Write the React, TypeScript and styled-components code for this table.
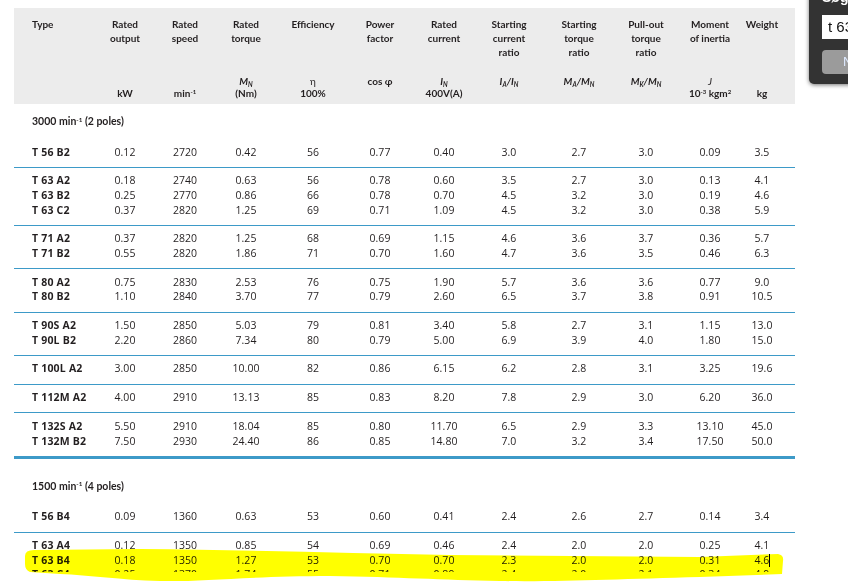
import React from 'react';
import styled, { createGlobalStyle, css } from 'styled-components';

const GlobalStyle = createGlobalStyle`
  html, body {
    margin: 0;
    padding: 0;
    background: #ffffff;
  }
  body {
    font-family: 'Open Sans', 'Liberation Sans', sans-serif;
    color: #231f20;
  }
`;

const columns = css`
  display: grid;
  grid-template-columns: 81px 60px 60px 62px 72px 62px 66px 64px 76px 58px 70px 34px;
  padding-right: 16px;
`;

const Page = styled.div`
  position: relative;
  width: 848px;
  height: 585px;
  overflow: hidden;
  background: #ffffff;
`;

const Sheet = styled.div`
  height: 572px;
  overflow: hidden;
  padding: 8px 0 0 14px;
  box-sizing: border-box;
  width: 795px;
`;

const HeaderBand = styled.div`
  ${columns};
  background: #ececec;
  height: 96px;
  box-sizing: border-box;
  padding-top: 9px;
`;

const HeadCell = styled.div<{ $left?: boolean }>`
  display: flex;
  flex-direction: column;
  text-align: ${({ $left }) => ($left ? 'left' : 'center')};
  padding-left: ${({ $left }) => ($left ? '18px' : '0')};
  font-family: Lato, 'Open Sans', sans-serif;
  font-size: 10px;
  font-weight: 700;
`;

const HeadTitle = styled.div`
  height: 58px;
  line-height: 14px;
`;

const HeadUnit = styled.div`
  line-height: 12px;
  height: 12px;
  white-space: nowrap;
`;

const Light = styled.span`
  font-weight: 400;
`;

const Ital = styled.span`
  font-style: italic;
`;

const Sup = styled.sup`
  font-size: 0.6em;
  vertical-align: baseline;
  position: relative;
  top: -0.55em;
`;

const Sub = styled.sub`
  font-size: 0.65em;
  vertical-align: baseline;
  position: relative;
  top: 0.25em;
`;

const SectionTitle = styled.div<{ $gap: number }>`
  padding: ${({ $gap }) => $gap}px 0 9px 18px;
  font-family: Lato, 'Open Sans', sans-serif;
  font-size: 10.5px;
  font-weight: 700;
  line-height: 14px;
`;

const Group = styled.div<{ $last?: boolean }>`
  padding: 5.6px 0 7.6px;
  border-bottom: ${({ $last }) => ($last ? '3px' : '1px')} solid #3d9ac8;
`;

const Row = styled.div`
  ${columns};
  font-size: 10.5px;
  line-height: 14.6px;
  white-space: nowrap;
`;

const TypeCell = styled.div`
  padding-left: 18px;
  font-weight: 700;
  letter-spacing: 0.2px;
`;

const Cell = styled.div`
  text-align: center;
`;

const Caret = styled.span`
  display: inline-block;
  width: 1px;
  height: 13px;
  background: #000;
  vertical-align: -3px;
  margin-right: -1px;
`;

const FindBox = styled.div`
  position: absolute;
  left: 809px;
  top: -8px;
  width: 80px;
  height: 92px;
  padding-left: 13px;
  box-sizing: border-box;
  background: #333333;
  border-radius: 5px;
  box-shadow: 0 1px 4px rgba(0, 0, 0, 0.55);
  font-family: 'Liberation Sans', Arial, sans-serif;
`;

const FindTitle = styled.div`
  color: #ffffff;
  font-weight: 700;
  font-size: 14px;
  line-height: 14px;
  height: 14px;
  margin-top: -2px;
`;

const FindInput = styled.div`
  margin-top: 11px;
  height: 24px;
  background: #ffffff;
  color: #111;
  font-size: 15px;
  line-height: 24px;
  padding-left: 6px;
  white-space: nowrap;
`;

const FindButton = styled.div`
  margin-top: 11px;
  height: 24px;
  background: #9b9b9b;
  border-radius: 4px;
  color: #dfeaff;
  font-size: 13px;
  line-height: 24px;
  padding-left: 21px;
`;

const Marker = styled.svg`
  position: absolute;
  left: 0;
  top: 0;
  pointer-events: none;
  mix-blend-mode: multiply;
`;

type Col = { title: string[]; unit: [React.ReactNode, React.ReactNode]; left?: boolean };

const headers: Col[] = [
  { title: ['Type'], unit: ['', ''], left: true },
  { title: ['Rated', 'output'], unit: ['', 'kW'] },
  { title: ['Rated', 'speed'], unit: ['', <>min<Sup>-1</Sup></>] },
  { title: ['Rated', 'torque'], unit: [<Ital>M<Sub>N</Sub></Ital>, '(Nm)'] },
  { title: ['Efficiency'], unit: [<Light>η</Light>, '100%'] },
  { title: ['Power', 'factor'], unit: ['cos φ', ''] },
  { title: ['Rated', 'current'], unit: [<Ital>I<Sub>N</Sub></Ital>, '400V(A)'] },
  { title: ['Starting', 'current', 'ratio'], unit: [<Ital>I<Sub>A</Sub>/I<Sub>N</Sub></Ital>, ''] },
  { title: ['Starting', 'torque', 'ratio'], unit: [<Ital>M<Sub>A</Sub>/M<Sub>N</Sub></Ital>, ''] },
  { title: ['Pull-out', 'torque', 'ratio'], unit: [<Ital>M<Sub>K</Sub>/M<Sub>N</Sub></Ital>, ''] },
  { title: ['Moment', 'of inertia'], unit: [<Light><Ital>J</Ital></Light>, <>10<Sup>-3</Sup> kgm<Sup>2</Sup></>] },
  { title: ['Weight'], unit: ['', 'kg'] },
];

type Section = { label: string; poles: string; gap: number; groups: string[][][] };

const sections: Section[] = [
  {
    label: '3000',
    poles: '2 poles',
    gap: 10,
    groups: [
      [['T 56 B2', '0.12', '2720', '0.42', '56', '0.77', '0.40', '3.0', '2.7', '3.0', '0.09', '3.5']],
      [
        ['T 63 A2', '0.18', '2740', '0.63', '56', '0.78', '0.60', '3.5', '2.7', '3.0', '0.13', '4.1'],
        ['T 63 B2', '0.25', '2770', '0.86', '66', '0.78', '0.70', '4.5', '3.2', '3.0', '0.19', '4.6'],
        ['T 63 C2', '0.37', '2820', '1.25', '69', '0.71', '1.09', '4.5', '3.2', '3.0', '0.38', '5.9'],
      ],
      [
        ['T 71 A2', '0.37', '2820', '1.25', '68', '0.69', '1.15', '4.6', '3.6', '3.7', '0.36', '5.7'],
        ['T 71 B2', '0.55', '2820', '1.86', '71', '0.70', '1.60', '4.7', '3.6', '3.5', '0.46', '6.3'],
      ],
      [
        ['T 80 A2', '0.75', '2830', '2.53', '76', '0.75', '1.90', '5.7', '3.6', '3.6', '0.77', '9.0'],
        ['T 80 B2', '1.10', '2840', '3.70', '77', '0.79', '2.60', '6.5', '3.7', '3.8', '0.91', '10.5'],
      ],
      [
        ['T 90S A2', '1.50', '2850', '5.03', '79', '0.81', '3.40', '5.8', '2.7', '3.1', '1.15', '13.0'],
        ['T 90L B2', '2.20', '2860', '7.34', '80', '0.79', '5.00', '6.9', '3.9', '4.0', '1.80', '15.0'],
      ],
      [['T 100L A2', '3.00', '2850', '10.00', '82', '0.86', '6.15', '6.2', '2.8', '3.1', '3.25', '19.6']],
      [['T 112M A2', '4.00', '2910', '13.13', '85', '0.83', '8.20', '7.8', '2.9', '3.0', '6.20', '36.0']],
      [
        ['T 132S A2', '5.50', '2910', '18.04', '85', '0.80', '11.70', '6.5', '2.9', '3.3', '13.10', '45.0'],
        ['T 132M B2', '7.50', '2930', '24.40', '86', '0.85', '14.80', '7.0', '3.2', '3.4', '17.50', '50.0'],
      ],
    ],
  },
  {
    label: '1500',
    poles: '4 poles',
    gap: 20,
    groups: [
      [['T 56 B4', '0.09', '1360', '0.63', '53', '0.60', '0.41', '2.4', '2.6', '2.7', '0.14', '3.4']],
      [
        ['T 63 A4', '0.12', '1350', '0.85', '54', '0.69', '0.46', '2.4', '2.0', '2.0', '0.25', '4.1'],
        ['T 63 B4', '0.18', '1350', '1.27', '53', '0.70', '0.70', '2.3', '2.0', '2.0', '0.31', '4.6|'],
        ['T 63 C4', '0.25', '1370', '1.74', '55', '0.71', '0.89', '2.4', '2.0', '2.1', '0.34', '4.9'],
      ],
    ],
  },
];

const DataRow: React.FC<{ values: string[] }> = ({ values }) => {
  const [type, ...rest] = values;
  return (
    <Row>
      <TypeCell>{type}</TypeCell>
      {rest.map((v, i) =>
        v.endsWith('|') ? (
          <Cell key={i}>
            {v.slice(0, -1)}
            <Caret />
          </Cell>
        ) : (
          <Cell key={i}>{v}</Cell>
        ),
      )}
    </Row>
  );
};

const highlight =
  'M25 556 Q25 550 34 550 L140 549 C250 550 350 553 450 555 L700 557 L778 554 Q784 555 783 561 L782 574 L700 577 C620 579 560 582 500 581 C440 580 400 577 330 576 C250 576 200 582 160 581 C120 580 90 575 60 574 L30 572 Q25 570 25 564 Z';

export default function App() {
  return (
    <>
      <GlobalStyle />
      <Page>
        <Sheet>
          <HeaderBand>
            {headers.map((h, i) => (
              <HeadCell key={i} $left={h.left}>
                <HeadTitle>
                  {h.title.map((t) => (
                    <div key={t}>{t}</div>
                  ))}
                </HeadTitle>
                <HeadUnit>{h.unit[0]}</HeadUnit>
                <HeadUnit>{h.unit[1]}</HeadUnit>
              </HeadCell>
            ))}
          </HeaderBand>
          {sections.map((s) => (
            <div key={s.label}>
              <SectionTitle $gap={s.gap}>
                {s.label} min<Sup>-1</Sup> ({s.poles})
              </SectionTitle>
              {s.groups.map((g, gi) => (
                <Group key={gi} $last={s.label === '3000' && gi === s.groups.length - 1}>
                  {g.map((r) => (
                    <DataRow key={r[0]} values={r} />
                  ))}
                </Group>
              ))}
            </div>
          ))}
        </Sheet>
        <Marker width="848" height="585" viewBox="0 0 848 585">
          <path d={highlight} fill="#ffff00" />
        </Marker>
        <FindBox>
          <FindTitle>Søg</FindTitle>
          <FindInput>t 63</FindInput>
          <FindButton>Næste</FindButton>
        </FindBox>
      </Page>
    </>
  );
}
